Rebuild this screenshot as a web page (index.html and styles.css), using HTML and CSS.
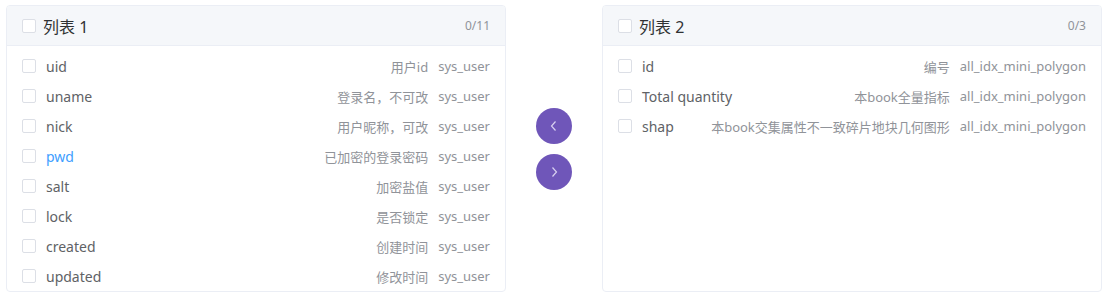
FILE: index.html
```html
<!DOCTYPE html>
<html lang="zh-CN">

<head>
    <meta charset="UTF-8">
    <title>字段穿梭框</title>
    <link rel="stylesheet" href="styles.css">
</head>

<body>
    <div class="transfer">
        <!-- 列表 1 -->
        <div class="panel">
            <div class="panel-header">
                <span class="check"></span>
                <span class="panel-title">列表 1</span>
                <span class="panel-count">0/11</span>
            </div>
            <div class="panel-body">
                <div class="item"><span class="check"></span><span class="name">uid</span><span class="label">用户id</span><span class="table">sys_user</span></div>
                <div class="item"><span class="check"></span><span class="name">uname</span><span class="label">登录名，不可改</span><span class="table">sys_user</span></div>
                <div class="item"><span class="check"></span><span class="name">nick</span><span class="label">用户昵称，可改</span><span class="table">sys_user</span></div>
                <div class="item hover"><span class="check"></span><span class="name">pwd</span><span class="label">已加密的登录密码</span><span class="table">sys_user</span></div>
                <div class="item"><span class="check"></span><span class="name">salt</span><span class="label">加密盐值</span><span class="table">sys_user</span></div>
                <div class="item"><span class="check"></span><span class="name">lock</span><span class="label">是否锁定</span><span class="table">sys_user</span></div>
                <div class="item"><span class="check"></span><span class="name">created</span><span class="label">创建时间</span><span class="table">sys_user</span></div>
                <div class="item"><span class="check"></span><span class="name">updated</span><span class="label">修改时间</span><span class="table">sys_user</span></div>
            </div>
        </div>

        <!-- Buttons -->
        <div class="buttons">
            <button class="move-btn" aria-label="移到左边">
                <svg width="14" height="14" viewBox="0 0 14 14"><path d="M8.5 2.5 L4.5 7 L8.5 11.5" fill="none" stroke="currentColor" stroke-width="1.2"/></svg>
            </button>
            <button class="move-btn" aria-label="移到右边">
                <svg width="14" height="14" viewBox="0 0 14 14"><path d="M5.5 2.5 L9.5 7 L5.5 11.5" fill="none" stroke="currentColor" stroke-width="1.2"/></svg>
            </button>
        </div>

        <!-- 列表 2 -->
        <div class="panel">
            <div class="panel-header">
                <span class="check"></span>
                <span class="panel-title">列表 2</span>
                <span class="panel-count">0/3</span>
            </div>
            <div class="panel-body">
                <div class="item"><span class="check"></span><span class="name">id</span><span class="label">编号</span><span class="table">all_idx_mini_polygon</span></div>
                <div class="item"><span class="check"></span><span class="name">Total quantity</span><span class="label">本book全量指标</span><span class="table">all_idx_mini_polygon</span></div>
                <div class="item"><span class="check"></span><span class="name">shap</span><span class="label">本book交集属性不一致碎片地块几何图形</span><span class="table">all_idx_mini_polygon</span></div>
            </div>
        </div>
    </div>
</body>

</html>
```

FILE: styles.css
```css
html, body {
    margin: 0;
    background-color: #ffffff;
}

body {
    padding: 5px 6px 0 6px;
    font-family: "Noto Sans", "Noto Sans CJK SC", sans-serif;
    color: #606266;
}

/* Transfer layout */
.transfer {
    display: flex;
    align-items: flex-start;
}

.panel {
    width: 500px;
    height: 287px;
    box-sizing: border-box;
    border: 1px solid #ebeef5;
    border-radius: 4px;
    overflow: hidden;
    background-color: #ffffff;
}

.panel-header {
    height: 40px;
    box-sizing: border-box;
    background-color: #f5f7fa;
    border-bottom: 1px solid #ebeef5;
    display: flex;
    align-items: center;
    padding: 0 15px;
}

.panel-title {
    font-size: 16px;
    color: #303133;
    margin-left: 7px;
    flex: 1;
}

.panel-count {
    font-size: 12px;
    color: #909399;
}

.panel-body {
    padding-top: 5px;
}

/* Checkbox */
.check {
    width: 14px;
    height: 14px;
    box-sizing: border-box;
    border: 1px solid #dcdfe6;
    border-radius: 2px;
    background-color: #ffffff;
    flex-shrink: 0;
}

/* List rows */
.item {
    height: 30px;
    display: flex;
    align-items: center;
    padding: 0 15px;
    font-size: 14px;
}

.item .check {
    margin-right: 10px;
}

.item .name {
    flex: 1;
    white-space: nowrap;
}

.item.hover .name {
    color: #409eff;
}

.item .label,
.item .table {
    font-size: 13px;
    color: #909399;
    white-space: nowrap;
}

.item .table {
    margin-left: 10px;
}

/* Move buttons */
.buttons {
    width: 96px;
    display: flex;
    flex-direction: column;
    align-items: center;
    gap: 10px;
    padding-top: 103px;
}

.move-btn {
    width: 36px;
    height: 36px;
    border: none;
    border-radius: 50%;
    background-color: #6f56b9;
    color: #d8d0f0;
    padding: 0;
    display: flex;
    align-items: center;
    justify-content: center;
}
```
